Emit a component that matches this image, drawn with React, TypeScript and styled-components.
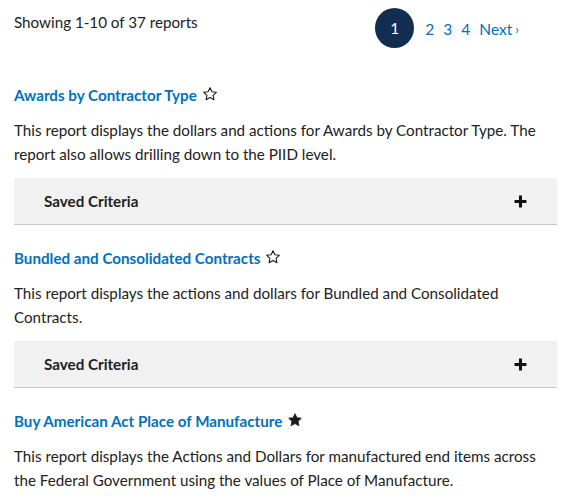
import React from 'react';
import styled, { createGlobalStyle } from 'styled-components';

const GlobalStyle = createGlobalStyle`
  body {
    margin: 0;
    background: #fff;
    font-family: 'Lato', 'Open Sans', sans-serif;
    color: #212121;
  }
`;

interface IReport {
  title: string;
  description: string;
  starred: boolean;
}

const reports: IReport[] = [
  {
    title: 'Awards by Contractor Type',
    description:
      'This report displays the dollars and actions for Awards by Contractor Type. The report also allows drilling down to the PIID level.',
    starred: false,
  },
  {
    title: 'Bundled and Consolidated Contracts',
    description: 'This report displays the actions and dollars for Bundled and Consolidated Contracts.',
    starred: false,
  },
  {
    title: 'Buy American Act Place of Manufacture',
    description:
      'This report displays the Actions and Dollars for manufactured end items across the Federal Government using the values of Place of Manufacture.',
    starred: true,
  },
];

const Star = ({ filled }: { filled: boolean }) => (
  <StarIcon viewBox="0 0 24 24" width="16" height="16">
    <path
      d="M12 2.5l2.9 6.1 6.6.8-4.9 4.6 1.3 6.6L12 17.3l-5.9 3.3 1.3-6.6-4.9-4.6 6.6-.8z"
      fill={filled ? '#1b1b1b' : 'none'}
      stroke="#1b1b1b"
      strokeWidth={filled ? 1.2 : 1.6}
      strokeLinejoin="round"
    />
  </StarIcon>
);

const Plus = () => (
  <svg viewBox="0 0 12 12" width="13" height="13">
    <path d="M6 0.5v11M0.5 6h11" stroke="#111" strokeWidth="2.8" />
  </svg>
);

export default function App() {
  return (
    <Page>
      <GlobalStyle />
      <Header>
        <Count>Showing 1-10 of 37 reports</Count>
        <Pagination>
          <Current>1</Current>
          <PageLink>2</PageLink>
          <PageLink>3</PageLink>
          <PageLink>4</PageLink>
          <PageLink>
            Next<Chevron>›</Chevron>
          </PageLink>
        </Pagination>
      </Header>
      {reports.map((r, i) => (
        <Report key={r.title} first={i === 0}>
          <Title>
            <TitleLink>{r.title}</TitleLink>
            <Star filled={r.starred} />
          </Title>
          <Description>{r.description}</Description>
          {i < reports.length - 1 && (
            <CriteriaBar>
              <span>Saved Criteria</span>
              <Plus />
            </CriteriaBar>
          )}
        </Report>
      ))}
    </Page>
  );
}

const Page = styled.div`
  padding: 8px 10px 0 14px;
  font-size: 15.2px;
`;

const Header = styled.div`
  display: flex;
  justify-content: space-between;
  align-items: flex-start;
`;

const Count = styled.div`
  line-height: 24px;
  margin-top: 2px;
`;

const Pagination = styled.div`
  display: flex;
  align-items: center;
  gap: 9px;
  margin-right: 38px;
  font-size: 15.5px;
`;

const Current = styled.div`
  width: 39px;
  height: 40px;
  border-radius: 50%;
  background: #112e51;
  color: #fff;
  display: flex;
  align-items: center;
  justify-content: center;
  margin-right: 2px;
`;

const PageLink = styled.a`
  color: #0071bc;
  display: flex;
  align-items: center;
  margin-top: 2px;
`;

const Chevron = styled.span`
  font-size: 13px;
  margin-left: 3px;
`;

const Report = styled.div<{ first: boolean }>`
  margin-top: ${p => (p.first ? 35 : 21)}px;
`;

const Title = styled.div`
  display: flex;
  align-items: center;
  gap: 5px;
  line-height: 24px;
`;

const TitleLink = styled.a`
  color: #0071bc;
  font-weight: 700;
`;

const StarIcon = styled.svg`
  display: block;
  margin-top: -2px;
`;

const Description = styled.p`
  margin: 11px 0 0;
  line-height: 24px;
`;

const CriteriaBar = styled.div`
  margin-top: 12px;
  height: 46px;
  background: #f1f1f1;
  border-bottom: 1px solid #c8c8c8;
  display: flex;
  align-items: center;
  justify-content: space-between;
  padding: 0 30px 0 30px;
  font-weight: 700;
`;
